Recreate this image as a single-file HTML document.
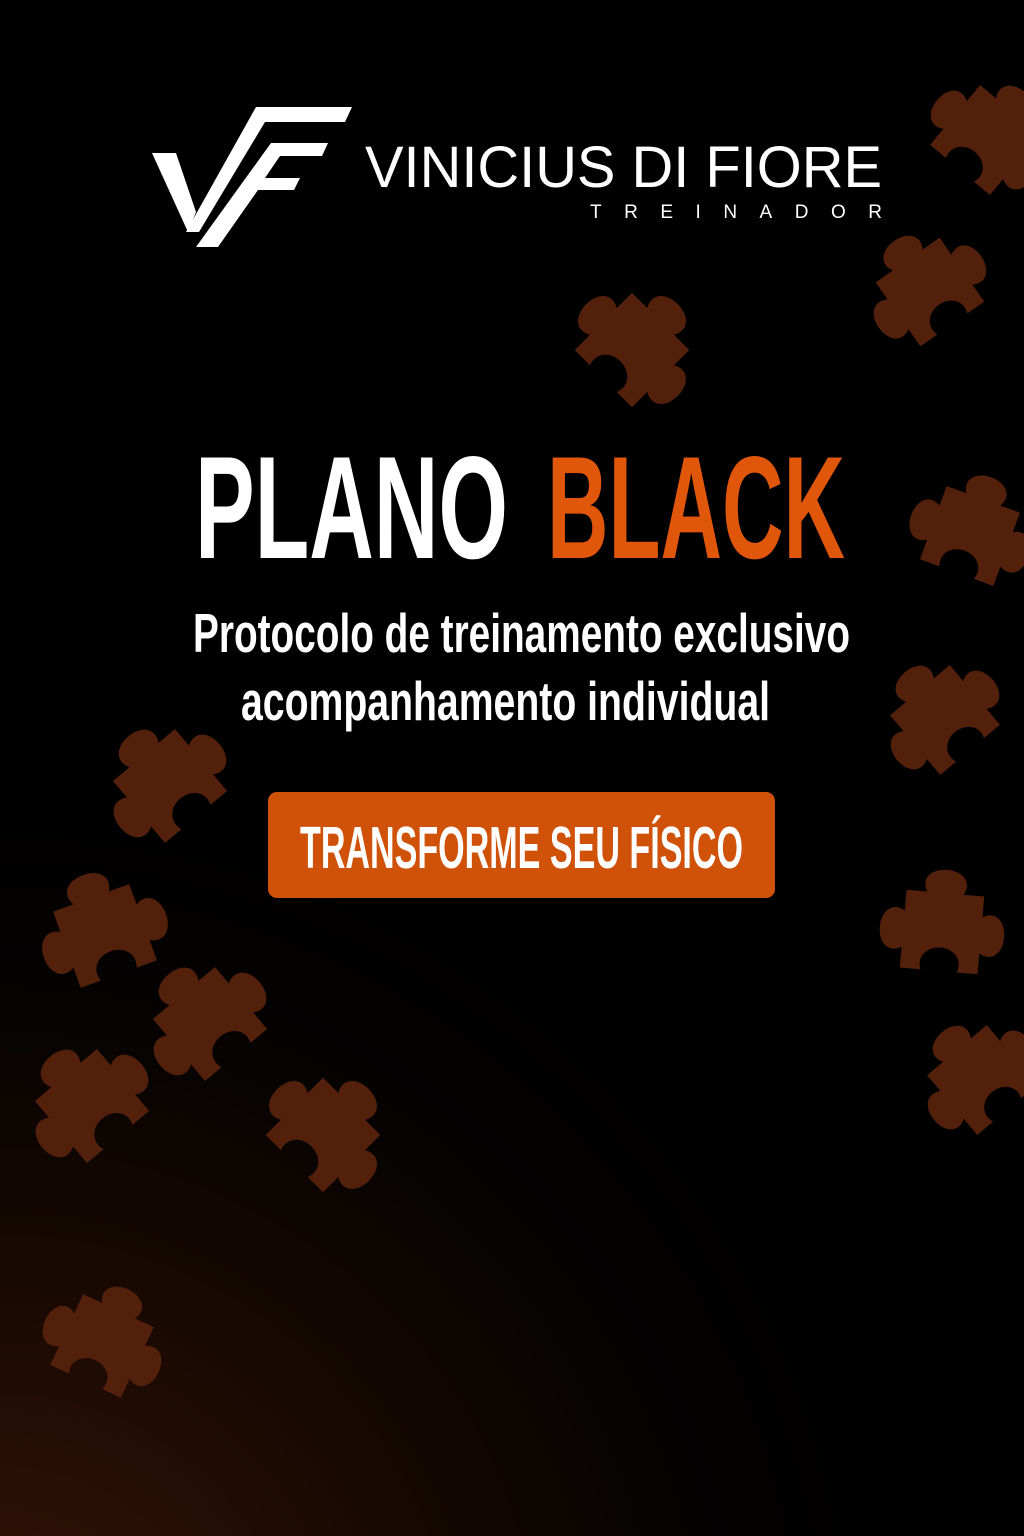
<!DOCTYPE html>
<html><head><meta charset="utf-8"><style>
html,body{margin:0;padding:0;background:#000}
body{width:1024px;height:1536px;overflow:hidden;position:relative;
background:radial-gradient(ellipse 900px 900px at 0% 110%, #3a1606 0%, #1c0a03 40%, #060302 75%, #000 100%);}
svg{position:absolute;left:0;top:0}
</style></head><body>
<svg width="1024" height="1536" viewBox="0 0 1024 1536" xmlns="http://www.w3.org/2000/svg">
<defs>
<path id="pz" d="M20 20 H36 C30 10 38 2 50 2 C62 2 70 10 64 20 H80 V36 C90 30 98 38 98 50 C98 62 90 70 80 64 V80 H64 C68 70 60 62 50 62 C40 62 32 70 36 80 H20 V64 C10 70 2 62 2 50 C2 38 10 30 20 36 Z"/>
</defs>
<g fill="#52200b">
<use href="#pz" transform="translate(985,140) rotate(40) scale(1.3) translate(-50,-50)"/>
<use href="#pz" transform="translate(930,292) rotate(-35) scale(1.3) translate(-50,-50)"/>
<use href="#pz" transform="translate(632,350) rotate(45) scale(1.35) translate(-50,-50)"/>
<use href="#pz" transform="translate(970,536) rotate(20) scale(1.3) translate(-50,-50)"/>
<use href="#pz" transform="translate(945,720) rotate(-40) scale(1.3) translate(-50,-50)"/>
<use href="#pz" transform="translate(942,932) rotate(5) scale(1.3) translate(-50,-50)"/>
<use href="#pz" transform="translate(982,1080) rotate(-40) scale(1.3) translate(-50,-50)"/>
<use href="#pz" transform="translate(170,786) rotate(-40) scale(1.35) translate(-50,-50)"/>
<use href="#pz" transform="translate(105,936) rotate(-20) scale(1.35) translate(-50,-50)"/>
<use href="#pz" transform="translate(210,1024) rotate(-40) scale(1.35) translate(-50,-50)"/>
<use href="#pz" transform="translate(92,1106) rotate(-40) scale(1.35) translate(-50,-50)"/>
<use href="#pz" transform="translate(323,1135) rotate(45) scale(1.35) translate(-50,-50)"/>
<use href="#pz" transform="translate(102,1346) rotate(25) scale(1.3) translate(-50,-50)"/>
</g>
<g fill="#fff">
<polygon points="152,153 176,153 196,212 188,232"/>
<polygon points="186,232 256,107 352,107 345,122 265,122 199,232"/>
<polygon points="196,247 271,143 328,143 322,156 280,156 265,178 300,178 294,190 258,190 218,247"/>
</g>
<g font-family="Liberation Sans, sans-serif" fill="#fff">
<text x="365" y="187" font-size="58" textLength="517" lengthAdjust="spacingAndGlyphs">VINICIUS DI FIORE</text>
<text x="590" y="218" font-size="19" textLength="292" lengthAdjust="spacing">TREINADOR</text>
</g>
<g font-family="Liberation Sans Narrow, Liberation Sans, sans-serif" font-weight="bold">
<text x="195" y="558" font-size="146" fill="#fff" textLength="313" lengthAdjust="spacingAndGlyphs">PLANO</text>
<text x="547" y="558" font-size="146" fill="#e0560a" textLength="298" lengthAdjust="spacingAndGlyphs">BLACK</text>
<text x="193" y="652" font-size="55" fill="#fff" textLength="657" lengthAdjust="spacingAndGlyphs">Protocolo de treinamento exclusivo</text>
<text x="241" y="720" font-size="55" fill="#fff" textLength="529" lengthAdjust="spacingAndGlyphs">acompanhamento individual</text>
</g>
<rect x="268" y="792" width="507" height="106" rx="9" fill="#d05208"/>
<text x="300" y="868" font-family="Liberation Sans Narrow, Liberation Sans, sans-serif" font-weight="bold" font-size="59" fill="#fff" textLength="443" lengthAdjust="spacingAndGlyphs">TRANSFORME SEU FÍSICO</text>
</svg>
</body></html>
